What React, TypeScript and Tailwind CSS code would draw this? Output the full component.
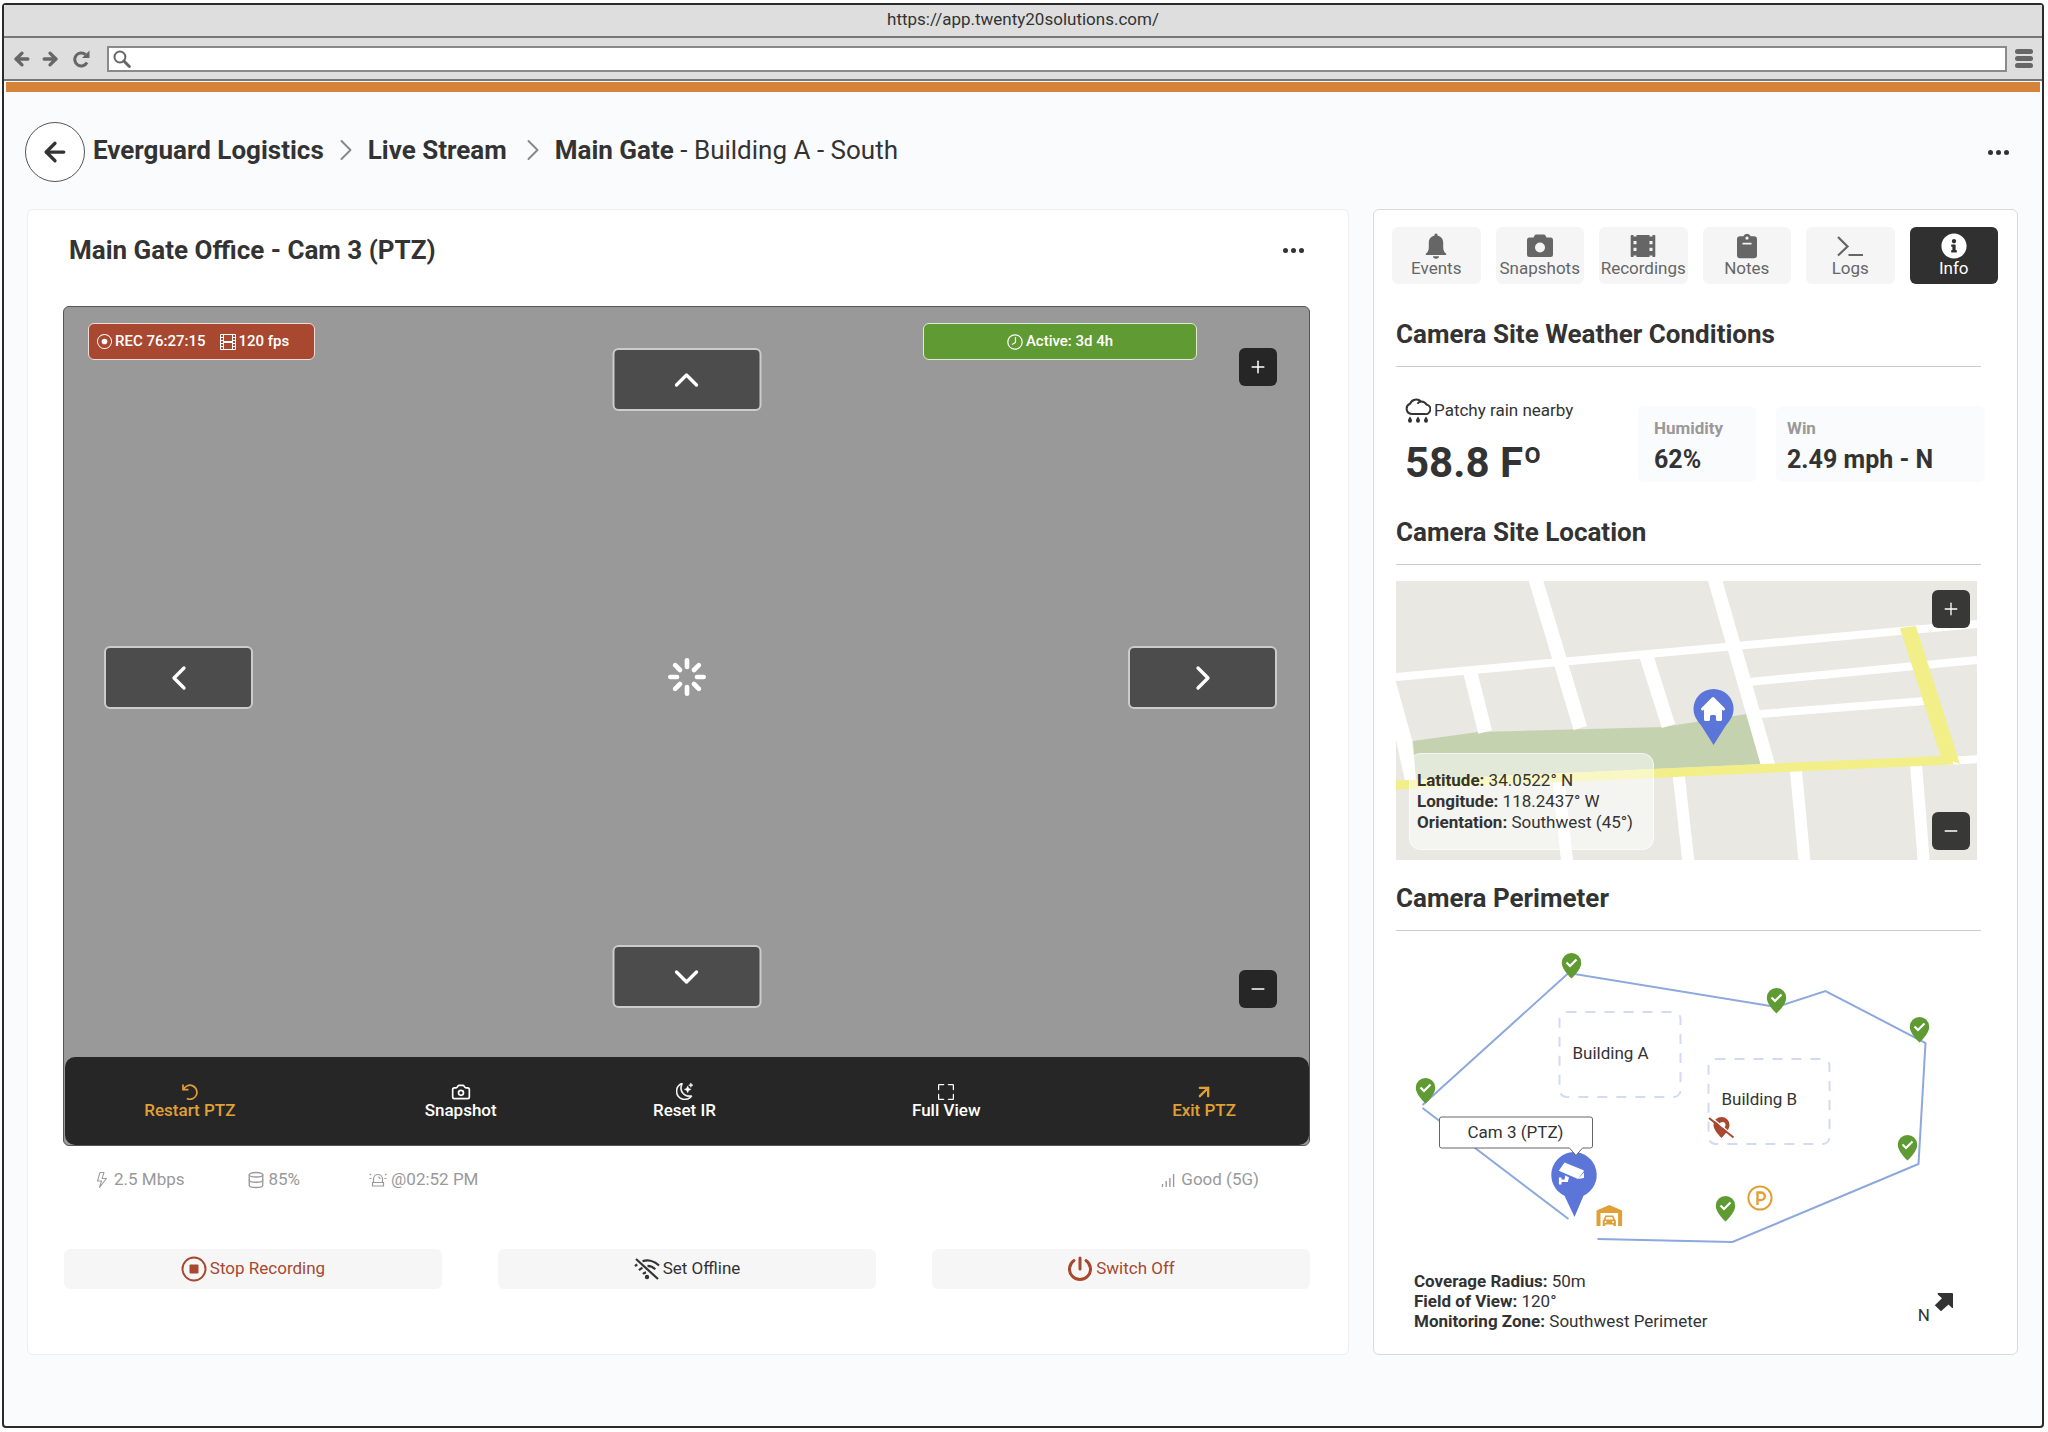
import { ReactNode } from 'react';
import { ArrowLeft, ArrowUpRight, Camera, ChevronDown, ChevronLeft, ChevronRight, ChevronUp, Database, Loader, Minus, Plus } from 'lucide-react';
import { FaInfoCircle } from 'react-icons/fa';
import { HiHome } from 'react-icons/hi';
import { BsFilm, BsFullscreen, BsLightning, BsMoonStars, BsRecordCircle } from 'react-icons/bs';

const BellIcon = () => (
  <svg viewBox="0 0 24 26" className="h-[26px] w-6" fill="currentColor">
    <path d="M12 0.5a1.600 1.600 0 0 0-1.600 1.600v.6C7 3.400 4.800 6 4.800 9.400v4.800c0 3.200-1 4.800-2.800 6.400-.6.6-.3 1.400.5 1.400h19c.8 0 1.100-.8.5-1.400-1.800-1.600-2.800-3.200-2.800-6.400V9.400c0-3.400-2.200-6-5.600-6.700v-.6A1.600 1.600 0 0 0 12 .5Z" />
    <path d="M9 23.300h6a3 2.400 0 0 1-6 0Z" />
  </svg>
);

const SolidCameraIcon = () => (
  <svg viewBox="0 0 26 26" className="h-[26px] w-[26px]" fill="currentColor" fillRule="evenodd">
    <path d="M9 1.500h8a1.500 1.500 0 0 1 1.300.8L19.500 4.500H23.500A2.500 2.500 0 0 1 26 7v14.500a2.500 2.500 0 0 1-2.500 2.500h-21A2.500 2.500 0 0 1 0 21.500V7A2.500 2.500 0 0 1 2.500 4.500H6.500L7.700 2.300A1.500 1.500 0 0 1 9 1.500Zm4 8a5 5 0 1 0 0 10 5 5 0 0 0 0-10Z" />
  </svg>
);

const FilmIcon = () => (
  <svg viewBox="0 0 26 26" className="h-[26px] w-[26px]" fill="currentColor" fillRule="evenodd">
    <path d="M1.500 2h2v1.500h3V2h13v1.500h3V2h2a.8.8 0 0 1 .8.8v20.400a.8.8 0 0 1-.8.8h-2v-1.500h-3V24h-13v-1.500h-3V24h-2a.8.8 0 0 1-.8-.8V2.800A.8.8 0 0 1 1.500 2ZM3.500 8v3.200h3V8Zm0 6.800V18h3v-3.200ZM19.500 8v3.200h3V8Zm0 6.800V18h3v-3.200Z" />
  </svg>
);

const ClipboardIcon = () => (
  <svg viewBox="0 0 20 26" className="h-[26px] w-5" fill="currentColor" fillRule="evenodd">
    <path d="M10 .8A4 4 0 0 0 6.300 3.300H3A3 3 0 0 0 0 6.300v16a3 3 0 0 0 3 3h14a3 3 0 0 0 3-3v-16a3 3 0 0 0-3-3h-3.300A4 4 0 0 0 10 .8Zm0 2.700a1.600 1.600 0 1 1 0 3.200 1.600 1.600 0 0 1 0-3.200ZM5.500 9.800h9v1.700h-9Z" />
  </svg>
);

const TerminalIcon = () => (
  <svg viewBox="0 0 26 26" className="h-[26px] w-[26px]" fill="none" stroke="currentColor" strokeWidth="2.200">
    <path d="M1 4l9.500 9.500L1 22.500M11.500 22H26" />
  </svg>
);

const RainIcon = () => (
  <svg viewBox="0 0 26 26" className="h-[26px] w-[26px]" fill="none" stroke="currentColor" strokeWidth="2">
    <path d="M6.500 16A5.300 5.300 0 0 1 5 5.800 6.700 6.700 0 0 1 16 3.500a6 6 0 0 1 5.500 3A4.800 4.800 0 0 1 19.500 16Z" />
    <path d="M16 3.500c-1.500.2-2.600.9-3.500 2.200" />
    <path d="M5 18.500c1.300 2 2 3 2 4.300a2 2 0 0 1-4 0c0-1.300.7-2.300 2-4.300Zm8 0c1.300 2 2 3 2 4.300a2 2 0 0 1-4 0c0-1.300.7-2.300 2-4.300Zm8 0c1.300 2 2 3 2 4.300a2 2 0 0 1-4 0c0-1.300.7-2.300 2-4.300Z" fill="currentColor" stroke="none" />
  </svg>
);

const ClockIcon = () => (
  <svg viewBox="0 0 16 16" className="size-4" fill="none" stroke="currentColor" strokeWidth="1.200">
    <circle cx="8" cy="8" r="7.200" />
    <path d="M8.500 3v5.500L5 10.500" />
  </svg>
);

const RestartIcon = () => (
  <svg viewBox="0 0 18 18" className="size-[18px]" fill="none" stroke="currentColor" strokeWidth="1.700">
    <path d="M2 1.500v5.200h5.500" />
    <path d="M2.500 6.500A7 7 0 1 1 5.800 15.500" />
  </svg>
);

const StopIcon = () => (
  <svg viewBox="0 0 26 26" className="size-[26px]" fill="none" stroke="currentColor" strokeWidth="2">
    <circle cx="13" cy="13" r="11.500" />
    <rect x="8.500" y="8.500" width="9" height="9" rx="1" fill="currentColor" stroke="none" />
  </svg>
);

const WifiOffIcon = () => (
  <svg viewBox="0 0 26 22" className="h-[22px] w-[26px]" fill="none" stroke="currentColor" strokeWidth="2.200">
    <path d="M2 1l22 20M8.500 3.300C14 1.300 20.500 3 25 7.600M13.500 7.800c3 .1 5.700 1.300 7.800 3.500M1 8.200l2.200-1.900M5 12.200c1-1 2.200-1.800 3.500-2.400M9 16c.8-.9 1.800-1.500 3-1.700" />
    <circle cx="13" cy="19" r="2.200" fill="currentColor" stroke="none" />
  </svg>
);

const PowerIcon = () => (
  <svg viewBox="0 0 26 26" className="size-[26px]" fill="none" stroke="currentColor" strokeWidth="3" strokeLinecap="round">
    <path d="M13 2v11M7 4.500a10.500 10.500 0 1 0 12 0" />
  </svg>
);

const SirenIcon = () => (
  <svg viewBox="0 0 18 16" className="h-4 w-[18px]" fill="none" stroke="currentColor" strokeWidth="1.200">
    <path d="M4.500 10.500V7a4.500 4.500 0 0 1 9 0v3.500M3.500 10.500h11V14h-11ZM9 5a2 2 0 0 1 2 2M.5 2l1.600 1M.5 6.500h2M17.500 2l-1.600 1M17.500 6.500h-2" />
  </svg>
);

const SignalIcon = () => (
  <svg viewBox="0 0 14 14" className="size-[14px]" stroke="currentColor" strokeWidth="1.400">
    <path d="M1.500 11v3M5.200 8v6M8.900 5v9M12.600 1v13" />
  </svg>
);

const EllipsisButton = ({ label }: { label: string }) => (
  <button type="button" aria-label={label} className="flex h-6 items-center gap-[3px]">
    <span className="size-[5px] rounded-full bg-[#333]" />
    <span className="size-[5px] rounded-full bg-[#333]" />
    <span className="size-[5px] rounded-full bg-[#333]" />
  </button>
);

const tabs: { label: string; icon: ReactNode; active?: boolean }[] = [
  { label: 'Events', icon: <BellIcon /> },
  { label: 'Snapshots', icon: <SolidCameraIcon /> },
  { label: 'Recordings', icon: <FilmIcon /> },
  { label: 'Notes', icon: <ClipboardIcon /> },
  { label: 'Logs', icon: <TerminalIcon /> },
  { label: 'Info', icon: <FaInfoCircle className="size-[26px]" />, active: true },
];

const ptzActions = [
  { label: 'Restart PTZ', icon: <RestartIcon />, color: 'text-[#e0a036]' },
  { label: 'Snapshot', icon: <Camera className="size-5" strokeWidth={2} />, color: 'text-white' },
  { label: 'Reset IR', icon: <BsMoonStars className="size-[17px]" strokeWidth={0.5} />, color: 'text-white' },
  { label: 'Full View', icon: <BsFullscreen className="size-4" strokeWidth={0.5} />, color: 'text-white' },
  { label: 'Exit PTZ', icon: <ArrowUpRight className="size-5" strokeWidth={2.8} />, color: 'text-[#e0a036]' },
];

function BrowserBar() {
  return (
    <header className="bg-[#dedede] text-[#666]">
      <div className="flex h-[33px] items-center justify-center border-b-2 border-[#777] pb-1 text-[17px] leading-5 text-[#333]">
        https://app.twenty20solutions.com/
      </div>
      <div className="flex h-[43px] items-center border-b-2 border-[#777] pr-[9px] pl-2">
        <button type="button" aria-label="Back"><ArrowLeft className="size-5" strokeWidth={4} /></button>
        <button type="button" aria-label="Forward" className="ml-2"><ArrowLeft className="size-5 rotate-180" strokeWidth={4} /></button>
        <button type="button" aria-label="Reload" className="ml-3">
          <svg viewBox="0 0 18 18" className="size-[18px]" fill="none" stroke="currentColor" strokeWidth="3">
            <path d="M15 12.500A6.500 6.500 0 1 1 13.500 4.500" />
            <path d="M17.500.5V8H10Z" fill="currentColor" stroke="none" />
          </svg>
        </button>
        <label className="ml-[17px] flex h-[26px] flex-1 items-center border-2 border-[#8a8a8a] bg-white pl-1">
          <svg viewBox="0 0 18 18" className="size-[18px]" fill="none" stroke="currentColor" strokeWidth="2">
            <circle cx="7" cy="7" r="5.500" />
            <path d="M11 11l5.500 5.500" strokeWidth="3" strokeLinecap="round" />
          </svg>
          <input type="text" aria-label="Address" className="w-full bg-transparent px-2 outline-none" />
        </label>
        <button type="button" aria-label="Menu" className="ml-2 flex flex-col gap-[2px]">
          <span className="h-[5px] w-[18px] rounded-full bg-[#666]" />
          <span className="h-[5px] w-[18px] rounded-full bg-[#666]" />
          <span className="h-[5px] w-[18px] rounded-full bg-[#666]" />
        </button>
      </div>
    </header>
  );
}

function Breadcrumb() {
  return (
    <div className="flex h-[60px] items-center justify-between pr-[9px]">
      <div className="flex items-center">
        <button type="button" aria-label="Go back" className="-ml-[2px] flex size-[60px] items-center justify-center rounded-full border border-[#555] bg-white">
          <ArrowLeft className="size-[30px]" strokeWidth={2.6} />
        </button>
        <nav aria-label="Breadcrumb" className="ml-2 flex items-center pb-1 text-[26px] leading-8">
          <a href="#site" className="font-bold">Everguard Logistics</a>
          <ChevronRight className="mx-1 h-9 w-9 text-[#888]" strokeWidth={1.3} />
          <a href="#live" className="font-bold">Live Stream</a>
          <ChevronRight className="mr-1 ml-2 h-9 w-9 text-[#888]" strokeWidth={1.3} />
          <span><b>Main Gate</b> - Building A - South</span>
        </nav>
      </div>
      <EllipsisButton label="Page options" />
    </div>
  );
}

const zoomButton = 'absolute flex size-[38px] items-center justify-center rounded-md';
const panButton = 'absolute flex h-[63px] w-[149px] items-center justify-center rounded-md border-2 border-[#ccc] bg-[#4c4c4c] text-white';

function VideoPlayer() {
  return (
    <div className="relative mt-10 flex h-[840px] flex-col justify-end rounded-md border border-[#555] bg-[#999] text-white">
      <div className="absolute top-4 left-6 flex h-[37px] w-[227px] items-center rounded-md border border-[#f2dcd6] bg-[#a84830] pl-2 text-[15px] font-medium">
        <BsRecordCircle className="size-[15px]" />
        <span className="ml-[3px]">REC 76:27:15</span>
        <BsFilm className="ml-[14px] size-4" />
        <span className="ml-[3px]">120 fps</span>
      </div>
      <div className="absolute top-4 right-[112px] flex h-[37px] w-[274px] items-center justify-center gap-[3px] rounded-md border border-[#dcecd0] bg-[#5f9a33] text-[15px] font-medium">
        <ClockIcon /> Active: 3d 4h
      </div>
      <button type="button" aria-label="Zoom in" className={`${zoomButton} top-[41px] right-8 bg-[#262626]`}><Plus className="size-5" strokeWidth={1.8} /></button>
      <button type="button" aria-label="Zoom out" className={`${zoomButton} right-8 bottom-[137px] bg-[#262626]`}><Minus className="size-5" strokeWidth={1.8} /></button>
      <button type="button" aria-label="Tilt up" className={`${panButton} top-[41px] left-1/2 -translate-x-1/2`}><ChevronUp className="size-10" strokeWidth={2} /></button>
      <button type="button" aria-label="Tilt down" className={`${panButton} bottom-[137px] left-1/2 -translate-x-1/2`}><ChevronDown className="size-10" strokeWidth={2} /></button>
      <button type="button" aria-label="Pan left" className={`${panButton} top-[339px] left-10`}><ChevronLeft className="size-10" strokeWidth={2} /></button>
      <button type="button" aria-label="Pan right" className={`${panButton} top-[339px] right-8`}><ChevronRight className="size-10" strokeWidth={2} /></button>
      <Loader className="absolute top-[350px] left-1/2 size-10 -translate-x-1/2" strokeWidth={2.8} />

      <div className="ml-px grid h-[88px] grid-cols-[250fr_292fr_156fr_368fr_148fr] items-center rounded-[10px] bg-[#262626] pr-[31px] pb-[3px]">
        {ptzActions.map((action) => (
          <button key={action.label} type="button" className={`flex flex-col items-center text-[17px] leading-4 font-medium ${action.color}`}>
            <span className="flex h-5 items-center">{action.icon}</span>
            {action.label}
          </button>
        ))}
      </div>
    </div>
  );
}

function StreamCard() {
  const footerButton = 'flex h-10 flex-1 items-center justify-center gap-[3px] rounded-md bg-[#f6f6f6] text-[17px]';
  return (
    <section className="min-w-0 flex-1 rounded-md border border-[#eee] bg-white pt-6 pr-[38px] pb-[65px] pl-[35px]">
      <div className="flex h-8 items-center justify-between pr-1.5 pl-1.5">
        <h1 className="text-[26px] leading-8 font-bold">Main Gate Office - Cam 3 (PTZ)</h1>
        <EllipsisButton label="Camera options" />
      </div>
      <VideoPlayer />
      <div className="mt-[22px] flex h-6 items-center pr-[51px] pl-[31px] text-[17px] text-[#999]">
        <span className="flex items-center gap-1"><BsLightning className="size-4" />2.5 Mbps</span>
        <span className="ml-[62px] flex items-center gap-1"><Database className="size-[18px]" strokeWidth={1.8} />85%</span>
        <span className="ml-[69px] flex items-center gap-1"><SirenIcon />@02:52 PM</span>
        <span className="ml-auto flex items-center gap-[6px]"><SignalIcon />Good (5G)</span>
      </div>
      <div className="mt-[57px] ml-px flex gap-[56px]">
        <button type="button" className={`${footerButton} text-[#a84830]`}><StopIcon />Stop Recording</button>
        <button type="button" className={footerButton}><WifiOffIcon />Set Offline</button>
        <button type="button" className={`${footerButton} text-[#a84830]`}><PowerIcon />Switch Off</button>
      </div>
    </section>
  );
}

const SectionTitle = ({ children }: { children: ReactNode }) => (
  <h2 className="border-b border-[#ccc] pb-4 text-[26px] leading-8 font-bold">{children}</h2>
);

function SiteMap() {
  return (
    <div className="relative mt-4 mr-1 h-[279px] overflow-hidden bg-[#e9e8e3]">
      <svg viewBox="0 0 580 279" className="size-full" preserveAspectRatio="none" fill="none">
        <path d="M17 160L82 151L267 146L350 133L367 183L20 199Z" fill="#c5d2b0" />
        <path d="M0 101L16 159L20 200H9L0 159Z" fill="#fff" />
        <g stroke="#fff">
          <path d="M0 96L580 43" strokeWidth="8" />
          <path d="M352 101L580 79M363 133L528 120" strokeWidth="8" />
          <path d="M138 -6L184 147M74 91L89 151M249 72L272 145M317 -6L372 186" strokeWidth="14" />
          <path d="M162 198L171 282M282 192L292 282M399 187L408 282M519 182L527 282" strokeWidth="12" />
          <path d="M550 180L584 178" strokeWidth="8" />
        </g>
        <path d="M0 204L556 179" stroke="#f3ef88" strokeWidth="9" />
        <path d="M503 47L519 45L563 183L544 176Z" fill="#f3ef88" />
        <path d="M317 108a20 20 0 0 1 20 20c0 7-4 12-8 17l-12 19l-12-19c-4-5-8-10-8-17a20 20 0 0 1 20-20Z" fill="#5b75d9" />
      </svg>
      <HiHome className="absolute top-[113px] left-[302px] size-[30px] text-white" />
      <div className="absolute bottom-[10px] left-[13px] h-[97px] w-[245px] rounded-xl border border-white/60 bg-white/50 px-[7px] pt-4 text-[17px] leading-[21px]">
        <p><b>Latitude:</b> 34.0522° N</p>
        <p><b>Longitude:</b> 118.2437° W</p>
        <p><b>Orientation:</b> Southwest (45°)</p>
      </div>
      <button type="button" aria-label="Zoom map in" className={`${zoomButton} top-[9px] right-[7px] bg-[#383836] text-white`}><Plus className="size-5" strokeWidth={1.6} /></button>
      <button type="button" aria-label="Zoom map out" className={`${zoomButton} right-[7px] bottom-[10px] bg-[#383836] text-white`}><Minus className="size-5" strokeWidth={1.6} /></button>
    </div>
  );
}

// x, y is the tip of each pin
const sensors = [
  { x: 175, y: 47 },
  { x: 380, y: 82 },
  { x: 523, y: 111 },
  { x: 29, y: 172 },
  { x: 511, y: 229 },
  { x: 329, y: 290 },
];

function PerimeterMap() {
  return (
    <svg viewBox="0 0 584 340" className="block h-[340px] w-full" fill="none">
      <path d="M201 308L336 311L522 233L529 112L429 60L380 76L172 42L26 174" stroke="#8ca8dd" strokeWidth="2" />
      <path d="M26 177L172 288" stroke="#8ca8dd" strokeWidth="2" />
      <g stroke="#d3dbf3" strokeWidth="2" strokeDasharray="10 9">
        <rect x="163" y="81" width="121" height="85" rx="7" />
        <rect x="312" y="128" width="121" height="85" rx="7" />
      </g>
      <g fill="#333" fontSize="17">
        <text x="176" y="128">Building A</text>
        <text x="325" y="174">Building B</text>
      </g>

      {sensors.map(({ x, y }) => (
        <g key={`${x}-${y}`} transform={`translate(${x - 10} ${y - 25})`}>
          <path d="M10 0a9.700 9.700 0 0 1 9.700 9.700C19.700 15 15 20.500 10 25.500C5 20.500.3 15 .3 9.700A9.700 9.700 0 0 1 10 0Z" fill="#5f9a33" />
          <path d="M5 9.500l3.500 3.500L15 6.500" stroke="#fff" strokeWidth="2.200" />
        </g>
      ))}

      {/* offline sensor */}
      <g>
        <path fillRule="evenodd" d="M325 186a8 8 0 0 1 8 8c0 4-4 9-8 13c-4-4-8-9-8-13a8 8 0 0 1 8-8Zm1 5a3 3 0 1 0 0 6a3 3 0 0 0 0-6Z" fill="#a84830" />
        <path d="M314.500 186L338.500 206" stroke="#fff" strokeWidth="1.500" />
        <path d="M312.500 187L337 206.500" stroke="#a84830" strokeWidth="2" />
      </g>

      {/* garage */}
      <g transform="translate(200 274)" fill="#e0a036">
        <path d="M0 21V5.500L12.800 0L25.600 5.500V21H21.600V8H4V21Z" />
        <path fillRule="evenodd" d="M8.800 10.500h8l1.700 4.200c.6.300.9.700.9 1.300V21h-2.600v-1.500H8.800V21H6.200v-5c0-.6.300-1 .9-1.300Zm1.200 1.500l-1 2.500h7.600l-1-2.500ZM9 16a1 1 0 1 0 0 2a1 1 0 0 0 0-2Zm7.500 0a1 1 0 1 0 0 2a1 1 0 0 0 0-2Z" />
      </g>

      {/* parking */}
      <g stroke="#e0a036">
        <circle cx="363.500" cy="267" r="11.600" strokeWidth="2" />
        <path d="M361 274V261.500h3.500a3.800 3.800 0 0 1 0 7.600H361" strokeWidth="2.400" />
      </g>

      {/* selected camera */}
      <path d="M177 221a23 23 0 0 1 10 43.800L178 286L168 264.800A23 23 0 0 1 177 221Z" fill="#5b75d9" />
      <g fill="#fff">
        <path d="M168 231.500l18.500 7.500c.8.300 1 .9.600 1.600l-5.600 7.400l-19.200-8.200Z" />
        <path d="M187.500 241.500v5.500l-6 .9ZM168.500 244.500l4 1.800l-1.200 4.600h-6.300v2.600h-2.600v-7h2.600v2h3.200Z" />
      </g>
      <path d="M45 186H194a2 2 0 0 1 2 2V215a2 2 0 0 1-2 2H186L179.500 224.500L173 217H45a2 2 0 0 1-2-2V188a2 2 0 0 1 2-2Z" fill="#fff" stroke="#666" />
      <text x="119" y="207" textAnchor="middle" fill="#333" fontSize="17">Cam 3 (PTZ)</text>
    </svg>
  );
}

function InfoPanel() {
  return (
    <aside className="w-[645px] shrink-0 rounded-md border border-[#d8dadc] bg-white pt-[17px] pb-[22px]">
      <div role="tablist" className="mr-[19px] ml-[18px] grid grid-cols-6 gap-[15px]">
        {tabs.map((tab) => (
          <button
            key={tab.label}
            type="button"
            role="tab"
            aria-selected={!!tab.active}
            className={`flex h-[57px] flex-col items-center rounded-md pt-[6px] text-[17px] leading-[19px] ${tab.active ? 'bg-[#303030] text-white' : 'bg-[#f5f5f5] text-[#666]'}`}
          >
            {tab.icon}
            {tab.label}
          </button>
        ))}
      </div>

      <div className="mt-[34px] mr-9 ml-[22px]">
        <SectionTitle>Camera Site Weather Conditions</SectionTitle>
        <div className="flex pt-8 pl-[9px]">
          <div className="w-[233px]">
            <p className="flex h-6 items-center gap-[3px] text-[17px]"><RainIcon />Patchy rain nearby</p>
            <p className="mt-5 text-[42px] leading-10 font-bold">58.8 Fº</p>
          </div>
          <div className="mt-[7px] h-[76px] w-[118px] rounded-md bg-[#fafbfc] pt-3 pl-4">
            <p className="text-[17px] leading-5 font-bold text-[#999]">Humidity</p>
            <p className="mt-1.5 text-[25px] leading-8 font-bold">62%</p>
          </div>
          <div className="mt-[7px] -mr-1 ml-5 h-[76px] flex-1 rounded-md bg-[#fafbfc] pt-3 pl-[11px]">
            <p className="text-[17px] leading-5 font-bold text-[#999]">Win</p>
            <p className="mt-1.5 text-[25px] leading-8 font-bold">2.49 mph - N</p>
          </div>
        </div>
      </div>

      <div className="mt-[33px] mr-9 ml-[22px]">
        <SectionTitle>Camera Site Location</SectionTitle>
        <SiteMap />
      </div>

      <div className="mt-[22px] mr-9 ml-[22px]">
        <SectionTitle>Camera Perimeter</SectionTitle>
        <PerimeterMap />
        <div className="flex items-end justify-between pr-[27px] pl-[18px] text-[17px] leading-5">
          <div>
            <p><b>Coverage Radius:</b> 50m</p>
            <p><b>Field of View:</b> 120°</p>
            <p><b>Monitoring Zone:</b> Southwest Perimeter</p>
          </div>
          <div className="flex items-end gap-1 pb-1.5">
            N
            <svg viewBox="0 0 20 20" className="mb-[13px] size-5" fill="currentColor">
              <path d="M3.500 1.500Q3.500 1 4.500 1H18q1 0 1 1V15.500q-.3 1-1.200.3L14.500 12.500L7 19.300L.8 13.200L8 6.200L4 2.800Z" />
            </svg>
          </div>
        </div>
      </div>
    </aside>
  );
}

export default function App() {
  return (
    <div className="flex min-h-screen flex-col bg-white pt-[3px] pr-1 pb-1 pl-[2px] font-['Roboto',sans-serif] text-[#333]">
      <div className="flex flex-1 flex-col rounded-sm border-2 border-[#2b2b2b] bg-[#fafbfd]">
        <BrowserBar />
        <div className="mx-[2px] mt-px h-[10px] bg-[#d6833a]" />
        <main className="pt-[30px] pr-6 pb-[60px] pl-[23px]">
          <Breadcrumb />
          <div className="mt-[27px] flex gap-6">
            <StreamCard />
            <InfoPanel />
          </div>
        </main>
      </div>
    </div>
  );
}
